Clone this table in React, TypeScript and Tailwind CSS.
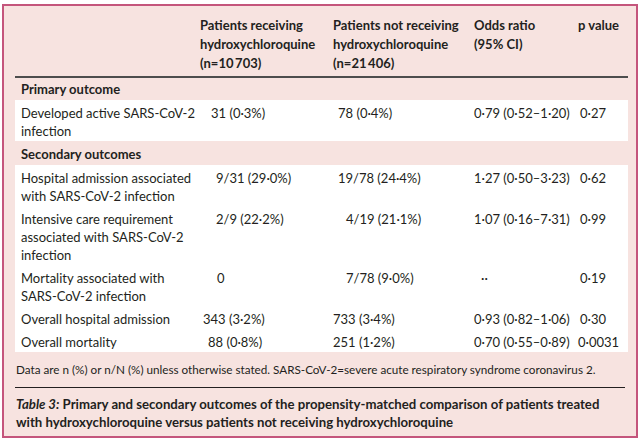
import React from "react";

const font = { fontFamily: "Lato, 'Open Sans', sans-serif" };

type Row = {
  label: React.ReactNode;
  c2: string;
  c2o: string;
  c3: string;
  c3o: string;
  c4: string;
  c4o: string;
  c5: string;
  c5o: string;
};

const rows: Row[] = [
  {
    label: (
      <>
        Hospital admission associated
        <br />
        with SARS-CoV-2 infection
      </>
    ),
    c2: "9/31 (29·0%)",
    c2o: "pl-[16px]",
    c3: "19/78 (24·4%)",
    c3o: "pl-[5px]",
    c4: "1·27 (0·50–3·23)",
    c4o: "pl-0",
    c5: "0·62",
    c5o: "pl-[2px]",
  },
  {
    label: (
      <>
        Intensive care requirement
        <br />
        associated with SARS-CoV-2
        <br />
        infection
      </>
    ),
    c2: "2/9 (22·2%)",
    c2o: "pl-[16px]",
    c3: "4/19 (21·1%)",
    c3o: "pl-[13px]",
    c4: "1·07 (0·16–7·31)",
    c4o: "pl-0",
    c5: "0·99",
    c5o: "pl-[2px]",
  },
  {
    label: (
      <>
        Mortality associated with
        <br />
        SARS-CoV-2 infection
      </>
    ),
    c2: "0",
    c2o: "pl-[17px]",
    c3: "7/78 (9·0%)",
    c3o: "pl-[13px]",
    c4: "··",
    c4o: "pl-[7px]",
    c5: "0·19",
    c5o: "pl-[2px]",
  },
  {
    label: <>Overall hospital admission</>,
    c2: "343 (3·2%)",
    c2o: "pl-[3px]",
    c3: "733 (3·4%)",
    c3o: "pl-0",
    c4: "0·93 (0·82–1·06)",
    c4o: "pl-0",
    c5: "0·30",
    c5o: "pl-[2px]",
  },
  {
    label: <>Overall mortality</>,
    c2: "88 (0·8%)",
    c2o: "pl-[8px]",
    c3: "251 (1·2%)",
    c3o: "pl-0",
    c4: "0·70 (0·55–0·89)",
    c4o: "pl-0",
    c5: "0·0031",
    c5o: "pl-0",
  },
];

const grid = "grid grid-cols-[185px_133px_141px_104px_50px]";

function DataRow({ r }: { r: Row }) {
  return (
    <div className={`${grid} pt-[4px] pb-[1px]`}>
      <div className="pl-[6px]">{r.label}</div>
      <div className={r.c2o}>{r.c2}</div>
      <div className={r.c3o}>{r.c3}</div>
      <div className={r.c4o}>{r.c4}</div>
      <div className={r.c5o}>{r.c5}</div>
    </div>
  );
}

export default function App() {
  return (
    <div className="w-[642px] h-[444px] bg-white pt-[4px] pl-[2px]" style={font}>
      <div className="w-[636px] h-[434px] border-2 border-[#c4557c] bg-[#f7e3e0] pl-[11px] pr-[8px] text-[13px] leading-[18px] text-[#231f20]">
        {/* header */}
        <div className={`${grid} pt-[10px] pb-[3px] font-bold leading-[19px] border-b-2 border-[#4d4d4d]`}>
          <div />
          <div className="whitespace-nowrap">
            Patients receiving
            <br />
            hydroxychloroquine
            <br />
            (n=10&#8201;703)
          </div>
          <div className="whitespace-nowrap">
            Patients not receiving
            <br />
            hydroxychloroquine
            <br />
            (n=21&#8201;406)
          </div>
          <div className="whitespace-nowrap">
            Odds ratio
            <br />
            (95% CI)
          </div>
          <div className="whitespace-nowrap">p value</div>
        </div>

        <div className="pt-[2px] pb-[2px] pl-[6px] font-bold">Primary outcome</div>

        <div className="bg-white">
          <DataRow
            r={{
              label: (
                <>
                  Developed active SARS-CoV-2
                  <br />
                  infection
                </>
              ),
              c2: "31 (0·3%)",
              c2o: "pl-[11px]",
              c3: "78 (0·4%)",
              c3o: "pl-[5px]",
              c4: "0·79 (0·52–1·20)",
              c4o: "pl-0",
              c5: "0·27",
              c5o: "pl-[2px]",
            }}
          />
        </div>

        <div className="pt-[4px] pb-[2px] pl-[6px] font-bold">Secondary outcomes</div>

        <div className="bg-white whitespace-nowrap">
          {rows.map((r, i) => (
            <DataRow key={i} r={r} />
          ))}
        </div>

        <div className="pt-[9px] pb-[10px] pl-[1px] text-[11.7px] leading-[16px] whitespace-nowrap">
          Data are n (%) or n/N (%) unless otherwise stated. SARS-CoV-2=severe acute respiratory syndrome coronavirus 2.
        </div>

        <div className="mr-[3px] border-t border-[#231f20] pt-[7px] pl-[1px] font-bold text-[13.2px] whitespace-nowrap">
          <span className="italic">Table 3:</span> Primary and secondary outcomes of the propensity-matched comparison of patients treated
          <br />
          with hydroxychloroquine versus patients not receiving hydroxychloroquine
        </div>
      </div>
    </div>
  );
}
